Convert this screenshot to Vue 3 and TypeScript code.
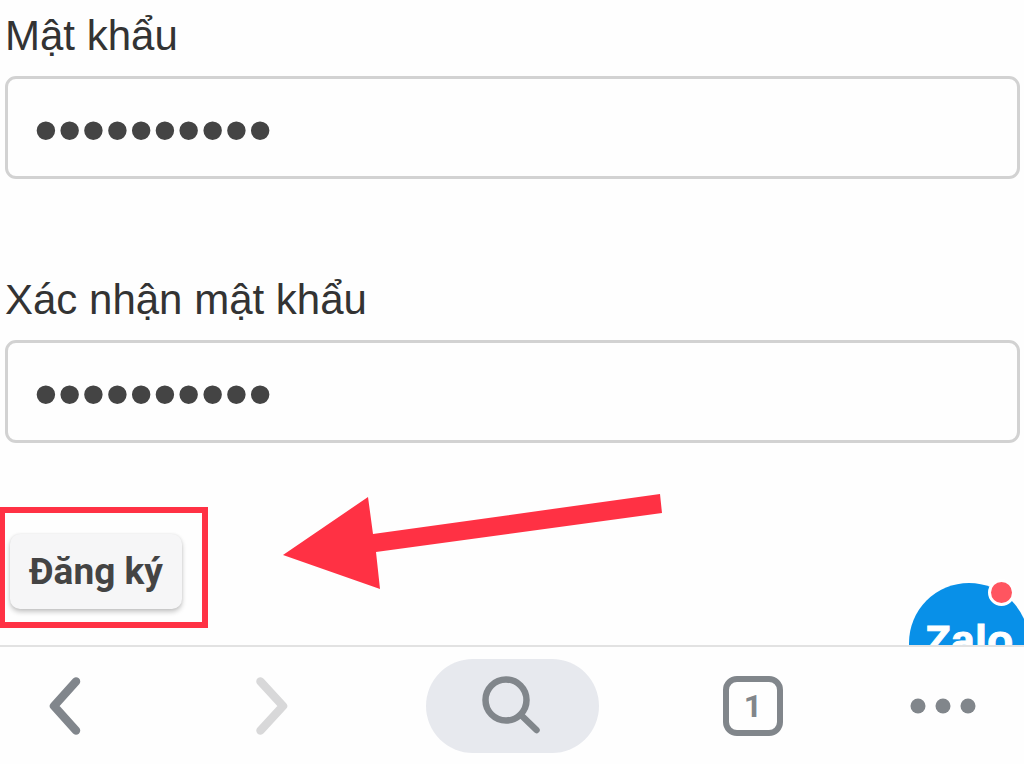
<script setup lang="ts">
import { ref } from 'vue'

interface Field {
  id: string
  label: string
}

const fields: Field[] = [
  { id: 'password', label: 'Mật khẩu' },
  { id: 'confirm', label: 'Xác nhận mật khẩu' },
]

const values = ref<Record<string, string>>({
  password: 'matkhau123',
  confirm: 'matkhau123',
})
</script>

<template>
  <div class="screen">
    <main class="content">
      <form class="form" @submit.prevent>
        <div v-for="field in fields" :key="field.id" class="field">
          <label class="label" :for="field.id">{{ field.label }}</label>
          <input :id="field.id" v-model="values[field.id]" class="input" type="password" autocomplete="off" />
        </div>
        <div class="highlight">
          <button class="submit" type="submit">Đăng ký</button>
        </div>
      </form>
      <svg class="arrow" viewBox="0 0 382 96" aria-hidden="true">
        <path d="M1 61 L86 3 L91 40 L378 0 L380 19 L94 58 L98 95 Z" fill="#ff3144" />
      </svg>
      <a class="zalo" href="#" aria-label="Zalo">
        <span class="zalo-text">Zalo</span>
        <span class="zalo-dot"></span>
      </a>
    </main>

    <nav class="toolbar">
      <button class="tool" type="button" aria-label="Back">
        <svg width="60" height="60" viewBox="0 0 60 60" fill="none">
          <path d="M41 5.500 L19 30 L41 54.500" stroke="#81868c" stroke-width="8.500" stroke-linecap="round" stroke-linejoin="round" />
        </svg>
      </button>
      <button class="tool" type="button" aria-label="Forward" disabled>
        <svg width="60" height="60" viewBox="0 0 60 60" fill="none">
          <path d="M18.500 5.500 L41 30 L18.500 54.500" stroke="#d8d8d9" stroke-width="8.500" stroke-linecap="round" stroke-linejoin="round" />
        </svg>
      </button>
      <button class="tool search" type="button" aria-label="Search">
        <svg width="60" height="60" viewBox="0 0 60 60" fill="none" stroke="#81868b">
          <circle cx="24" cy="24" r="20.500" stroke-width="6.500" />
          <path d="M39 39 L54.500 54" stroke-width="6.500" stroke-linecap="round" />
        </svg>
      </button>
      <button class="tool" type="button" aria-label="Tabs">
        <span class="tabs">1</span>
      </button>
      <button class="tool" type="button" aria-label="Menu">
        <svg width="66" height="16" viewBox="0 0 66 16" fill="#81868b">
          <circle cx="8" cy="8" r="7.500" />
          <circle cx="33" cy="8" r="7.500" />
          <circle cx="58" cy="8" r="7.500" />
        </svg>
      </button>
    </nav>
  </div>
</template>

<style>
body {
  margin: 0;
  background: #fefefe;
}
</style>

<style scoped>
.screen {
  display: flex;
  flex-direction: column;
  height: 100vh;
  font-family: 'Liberation Sans', Arial, sans-serif;
  color: #333;
}

.content {
  position: relative;
  flex: 1;
  min-height: 0;
  overflow: hidden;
}

.form {
  display: flex;
  flex-direction: column;
  align-items: flex-start;
}

.field {
  display: flex;
  flex-direction: column;
  gap: 4px;
  box-sizing: border-box;
  width: 100%;
  height: 264px;
  padding: 0 4px 0 5px;
}

.label {
  font-size: 42px;
  line-height: 72px;
}

.input {
  box-sizing: border-box;
  width: 100%;
  height: 103px;
  padding: 2px 26px 0;
  border: 3px solid #d2d2d2;
  border-radius: 11px;
  outline: none;
  background: #fefefe;
  color: #444;
  font-family: 'Liberation Sans', Arial, sans-serif;
  font-size: 68px;
}

.highlight {
  margin-top: -21px;
  padding: 21px 20px 13px 5px;
  border: 6px solid #ff3144;
  border-left-width: 5px;
}

.submit {
  display: block;
  height: 75px;
  padding: 0 19px;
  border: 0;
  border-radius: 10px;
  background: #f6f6f7;
  box-shadow: 0 3px 5px rgba(0, 0, 0, 0.22), 0 0 3px rgba(0, 0, 0, 0.08);
  color: #444;
  font-family: Roboto, sans-serif;
  font-size: 37px;
  font-weight: 700;
}

.arrow {
  position: absolute;
  top: 494px;
  left: 282px;
  width: 382px;
  height: 96px;
}

.zalo {
  position: absolute;
  right: -5px;
  bottom: -58px;
  width: 120px;
  height: 120px;
  border-radius: 50%;
  background: #0890e8;
  color: #fff;
  text-align: center;
  text-decoration: none;
}

.zalo-text {
  display: block;
  padding-top: 32px;
  font-size: 43px;
  font-weight: 700;
  line-height: 50px;
  -webkit-text-stroke: 1px #fff;
}

.zalo-dot {
  position: absolute;
  top: -4px;
  right: 14px;
  width: 21px;
  height: 21px;
  border: 3px solid #fff;
  border-radius: 50%;
  background: #ff5560;
}

.toolbar {
  display: grid;
  grid-template-columns: 130fr 284fr 196fr 286fr 94fr;
  align-items: center;
  justify-items: center;
  box-sizing: border-box;
  height: 119px;
  padding-right: 34px;
  border-top: 2px solid #e2e2e2;
}

.tool {
  display: flex;
  align-items: center;
  justify-content: center;
  padding: 0;
  border: 0;
  background: none;
}

.search {
  width: 173px;
  height: 94px;
  border-radius: 47px;
  background: #e7e9ee;
}

.tabs {
  box-sizing: border-box;
  width: 60px;
  height: 60px;
  border: 6px solid #81868b;
  border-radius: 14px;
  color: #81868b;
  font-family: Roboto, sans-serif;
  font-size: 32px;
  font-weight: 700;
  line-height: 48px;
  text-align: center;
}
</style>
